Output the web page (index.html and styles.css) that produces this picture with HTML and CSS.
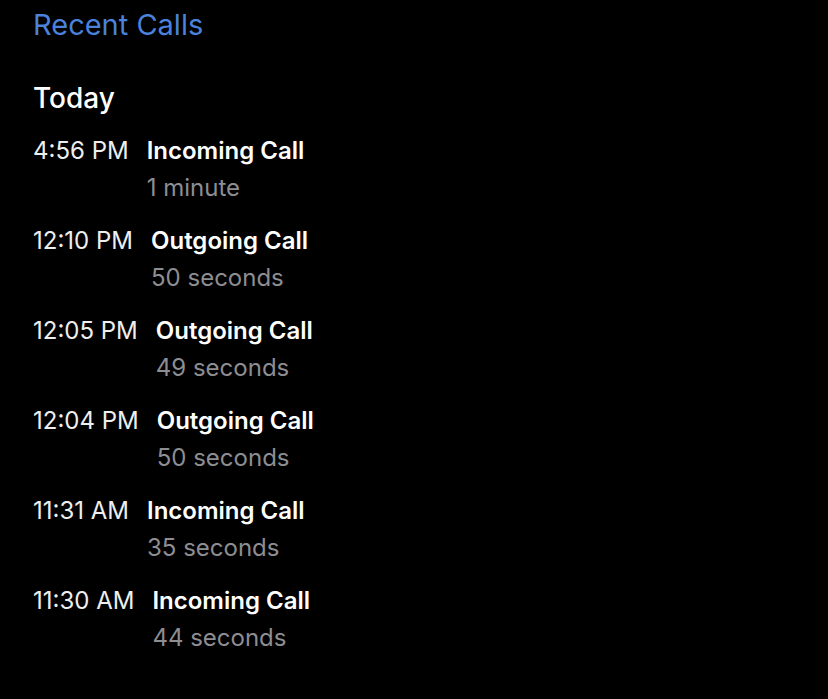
FILE: index.html
```html
<!DOCTYPE html>
<html lang="en">
<head>
    <meta charset="UTF-8">
    <meta name="viewport" content="width=device-width, initial-scale=1.0">
    <title>Recent Calls</title>
    <link rel="stylesheet" href="styles.css">
</head>
<body>
    <div class="page">
        <h2 class="back-title">Recent Calls</h2>
        <h1 class="day">Today</h1>

        <div class="calls">
            <div class="call">
                <span class="time">4:56 PM</span>
                <div class="info">
                    <div class="type">Incoming Call</div>
                    <div class="duration">1 minute</div>
                </div>
            </div>
            <div class="call">
                <span class="time">12:10 PM</span>
                <div class="info">
                    <div class="type">Outgoing Call</div>
                    <div class="duration">50 seconds</div>
                </div>
            </div>
            <div class="call">
                <span class="time">12:05 PM</span>
                <div class="info">
                    <div class="type">Outgoing Call</div>
                    <div class="duration">49 seconds</div>
                </div>
            </div>
            <div class="call">
                <span class="time">12:04 PM</span>
                <div class="info">
                    <div class="type">Outgoing Call</div>
                    <div class="duration">50 seconds</div>
                </div>
            </div>
            <div class="call">
                <span class="time">11:31 AM</span>
                <div class="info">
                    <div class="type">Incoming Call</div>
                    <div class="duration">35 seconds</div>
                </div>
            </div>
            <div class="call">
                <span class="time">11:30 AM</span>
                <div class="info">
                    <div class="type">Incoming Call</div>
                    <div class="duration">44 seconds</div>
                </div>
            </div>
        </div>
    </div>
</body>
</html>
```

FILE: styles.css
```css
html, body {
    margin: 0;
    background: #000;
}
body {
    font-family: Inter, "Noto Sans", Arial, sans-serif;
    color: #f2f2f2;
}
.page {
    padding: 7px 33px 0;
}
.back-title {
    margin: 0;
    font-size: 29px;
    font-weight: 400;
    line-height: 36px;
    color: #4a82dc;
}
.day {
    margin: 37px 0 0;
    font-size: 28px;
    font-weight: 500;
    line-height: 36px;
    color: #fff;
}
.calls {
    margin-top: 17px;
}
.call {
    display: flex;
    gap: 18px;
    margin-bottom: 17px;
}
.time {
    font-size: 24px;
    line-height: 36px;
    color: #eee;
}
.type {
    font-size: 24px;
    font-weight: 600;
    line-height: 36px;
    color: #fff;
}
.duration {
    font-size: 24px;
    line-height: 37px;
    color: #8d8d92;
}
```
